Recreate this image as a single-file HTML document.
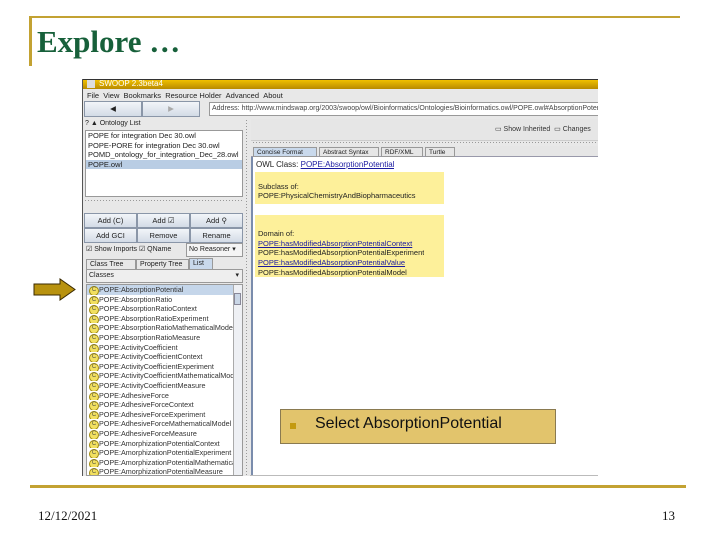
<!DOCTYPE html>
<html><head><meta charset="utf-8"><style>
*{margin:0;padding:0;box-sizing:border-box}
body{width:720px;height:540px;background:#fff;position:relative;overflow:hidden;font-family:"Liberation Sans",sans-serif}
.a{position:absolute}
.t{font-size:7.5px;color:#222;white-space:nowrap;overflow:hidden}
.btn{position:absolute;background:linear-gradient(#f2f5f9,#d3dbe6);border:1px solid #8a96a8;font-size:7.5px;color:#222;text-align:center;line-height:13px}
.li{height:9.6px;line-height:9.6px;font-size:7.2px;color:#333;white-space:nowrap;overflow:hidden;padding-left:12px;position:relative}
.li:before{content:"C";position:absolute;left:2px;top:1px;width:8px;height:8px;border-radius:50%;background:#f2e060;border:1px solid #a08a10;font-size:6px;line-height:6px;text-align:center;color:#554}
.lk{color:#1a1aa0;text-decoration:underline}
.dots{background:repeating-linear-gradient(90deg,#999 0 1px,transparent 1px 3px)}
.vdots{background:repeating-linear-gradient(180deg,#999 0 1px,transparent 1px 3px)}
</style></head><body>
<div class="a" style="left:29px;top:16px;width:651px;height:2px;background:#c3a232"></div>
<div class="a" style="left:29px;top:16px;width:3px;height:50px;background:#c3a232"></div>
<div class="a" style="left:37px;top:24px;font-family:'Liberation Serif',serif;font-weight:bold;font-size:31px;color:#17603a">Explore …</div>

<div class="a" style="left:82px;top:79px;width:516px;height:397px;background:#e8e8e8;border-left:1px solid #555;overflow:hidden">
 <div class="a" style="left:0;top:0;width:516px;height:10px;background:linear-gradient(#f0c000,#b88a00);border-top:1px solid #333"></div>
 <div class="a" style="left:4px;top:1px;width:8px;height:8px;background:#ddd"></div>
 <div class="a" style="left:16px;top:0;font-size:8px;color:#fff;line-height:10px">SWOOP 2.3beta4</div>
 <div class="a t" style="left:4px;top:12px;font-size:7.5px">File&nbsp;&nbsp;View&nbsp;&nbsp;Bookmarks&nbsp;&nbsp;Resource Holder&nbsp;&nbsp;Advanced&nbsp;&nbsp;About</div>
 <div class="btn" style="left:1px;top:22px;width:58px;height:16px;line-height:14px">◀</div>
 <div class="btn" style="left:59px;top:22px;width:58px;height:16px;line-height:14px;color:#aaa">▶</div>
 <div class="a t" style="left:126px;top:23px;width:390px;height:14px;background:#fff;border:1px solid #999;line-height:12px;padding-left:2px;font-size:7px;color:#444">Address: http://www.mindswap.org/2003/swoop/owl/Bioinformatics/Ontologies/Bioinformatics.owl/POPE.owl#AbsorptionPotential</div>
 <div class="a t" style="left:2px;top:41px;font-size:7px">? ▲ Ontology List</div>
 <div class="a" style="left:2px;top:51px;width:158px;height:67px;background:#fff;border:1px solid #999">
  <div class="t" style="padding-left:2px;line-height:9.5px">POPE for integration Dec 30.owl</div>
  <div class="t" style="padding-left:2px;line-height:9.5px">POPE-PORE for integration Dec 30.owl</div>
  <div class="t" style="padding-left:2px;line-height:9.5px">POMD_ontology_for_integration_Dec_28.owl</div>
  <div class="t" style="padding-left:2px;line-height:9.5px;background:#b9cde4">POPE.owl</div>
 </div>
 <div class="a dots" style="left:2px;top:121px;width:158px;height:1px"></div>
 <div class="btn" style="left:1px;top:134px;width:53px;height:15px">Add (C)</div>
 <div class="btn" style="left:54px;top:134px;width:53px;height:15px">Add ☑</div>
 <div class="btn" style="left:107px;top:134px;width:53px;height:15px">Add ⚲</div>
 <div class="btn" style="left:1px;top:149px;width:53px;height:15px">Add GCI</div>
 <div class="btn" style="left:54px;top:149px;width:53px;height:15px">Remove</div>
 <div class="btn" style="left:107px;top:149px;width:53px;height:15px">Rename</div>
 <div class="a t" style="left:3px;top:166px;font-size:7px">☑ Show Imports&nbsp;☑ QName</div>
 <div class="a t" style="left:103px;top:164px;width:57px;height:14px;background:#f4f4f4;border:1px solid #999;font-size:7px;line-height:12px;padding-left:2px">No Reasoner ▾</div>
 <div class="a t" style="left:3px;top:180px;width:50px;height:10px;border:1px solid #999;border-bottom:none;font-size:7px;line-height:9px;padding-left:3px">Class Tree</div>
 <div class="a t" style="left:53px;top:180px;width:53px;height:10px;border:1px solid #999;border-bottom:none;font-size:7px;line-height:9px;padding-left:3px">Property Tree</div>
 <div class="a t" style="left:106px;top:179px;width:24px;height:11px;background:#c9d9ec;border:1px solid #999;border-bottom:none;font-size:7px;line-height:10px;padding-left:3px">List</div>
 <div class="a t" style="left:3px;top:190px;width:157px;height:14px;background:#eee;border:1px solid #999;font-size:7px;line-height:12px;padding-left:2px">Classes<span style="float:right;padding-right:3px">▾</span></div>
 <div class="a" style="left:3px;top:205px;width:157px;height:192px;background:#fff;border:1px solid #999;overflow:hidden">
  <div class="a vdots" style="right:0;top:0;width:9px;height:192px;background:#eef0f4;border-left:1px solid #aaa"></div>
  <div class="a" style="right:1px;top:8px;width:7px;height:12px;background:#c9d6e6;border:1px solid #889"></div>
  <div style="width:146px">
  <div class="li" style="background:#c5d6ea">POPE:AbsorptionPotential</div>
  <div class="li">POPE:AbsorptionRatio</div>
  <div class="li">POPE:AbsorptionRatioContext</div>
  <div class="li">POPE:AbsorptionRatioExperiment</div>
  <div class="li">POPE:AbsorptionRatioMathematicalModel</div>
  <div class="li">POPE:AbsorptionRatioMeasure</div>
  <div class="li">POPE:ActivityCoefficient</div>
  <div class="li">POPE:ActivityCoefficientContext</div>
  <div class="li">POPE:ActivityCoefficientExperiment</div>
  <div class="li">POPE:ActivityCoefficientMathematicalModel</div>
  <div class="li">POPE:ActivityCoefficientMeasure</div>
  <div class="li">POPE:AdhesiveForce</div>
  <div class="li">POPE:AdhesiveForceContext</div>
  <div class="li">POPE:AdhesiveForceExperiment</div>
  <div class="li">POPE:AdhesiveForceMathematicalModel</div>
  <div class="li">POPE:AdhesiveForceMeasure</div>
  <div class="li">POPE:AmorphizationPotentialContext</div>
  <div class="li">POPE:AmorphizationPotentialExperiment</div>
  <div class="li">POPE:AmorphizationPotentialMathematical</div>
  <div class="li">POPE:AmorphizationPotentialMeasure</div>
  </div>
 </div>
 <div class="a vdots" style="left:163px;top:41px;width:1px;height:356px"></div>
 <div class="a" style="left:168px;top:40px;width:348px;height:22px;background:#e6e6e6;border-bottom:1px solid #ccc"></div>
 <div class="a t" style="left:412px;top:46px;font-size:7px;color:#333">▭ Show Inherited&nbsp;&nbsp;▭ Changes</div>
 <div class="a dots" style="left:170px;top:63px;width:346px;height:1px"></div>
 <div class="a" style="left:168px;top:67px;width:348px;height:11px;background:#e6e6e6;border-bottom:1px solid #99a"></div>
 <div class="a t" style="left:170px;top:68px;width:64px;height:10px;background:#c9d9ec;border:1px solid #999;font-size:6.5px;line-height:9px;padding-left:3px">Concise Format</div>
 <div class="a t" style="left:236px;top:68px;width:60px;height:10px;border:1px solid #999;font-size:6.5px;line-height:9px;padding-left:3px">Abstract Syntax</div>
 <div class="a t" style="left:298px;top:68px;width:42px;height:10px;border:1px solid #999;font-size:6.5px;line-height:9px;padding-left:3px">RDF/XML</div>
 <div class="a t" style="left:342px;top:68px;width:30px;height:10px;border:1px solid #999;font-size:6.5px;line-height:9px;padding-left:3px">Turtle</div>
 <div class="a" style="left:168px;top:78px;width:348px;height:319px;background:#fff;border-left:2px solid #7a8cac"></div>
 <div class="a t" style="left:173px;top:81px;font-size:8px">OWL Class: <span class="lk">POPE:AbsorptionPotential</span></div>
 <div class="a" style="left:172px;top:93px;width:189px;height:32px;background:#fdf09a"></div>
 <div class="a t" style="left:175px;top:103px;font-size:7.5px;line-height:9px">Subclass of:<br>POPE:PhysicalChemistryAndBiopharmaceutics</div>
 <div class="a" style="left:172px;top:136px;width:189px;height:62px;background:#fdf09a"></div>
 <div class="a t" style="left:175px;top:150px;font-size:7.5px;line-height:9.7px">Domain of:<br><span class="lk">POPE:hasModifiedAbsorptionPotentialContext</span><br>POPE:hasModifiedAbsorptionPotentialExperiment<br><span class="lk">POPE:hasModifiedAbsorptionPotentialValue</span><br>POPE:hasModifiedAbsorptionPotentialModel</div>
</div>
<div class="a" style="left:250px;top:475px;width:348px;height:1px;background:#bbb"></div>

<svg class="a" style="left:33px;top:278px" width="44" height="23"><polygon points="1,6 27,6 27,1 42,11.5 27,22 27,17 1,17" fill="#b8920f" stroke="#3a2a00" stroke-width="1"/></svg>

<div class="a" style="left:280px;top:409px;width:276px;height:35px;background:#e2c46c;border:1px solid #8a7a50"></div>
<div class="a" style="left:290px;top:423px;width:6px;height:6px;background:#c49a10"></div>
<div class="a" style="left:315px;top:415px;font-size:16px;color:#111">Select AbsorptionPotential</div>

<div class="a" style="left:30px;top:485px;width:656px;height:3px;background:#c3a232"></div>
<div class="a" style="left:38px;top:508px;font-family:'Liberation Serif',serif;font-size:13px;color:#111">12/12/2021</div>
<div class="a" style="left:662px;top:508px;font-family:'Liberation Serif',serif;font-size:13px;color:#111">13</div>
</body></html>
